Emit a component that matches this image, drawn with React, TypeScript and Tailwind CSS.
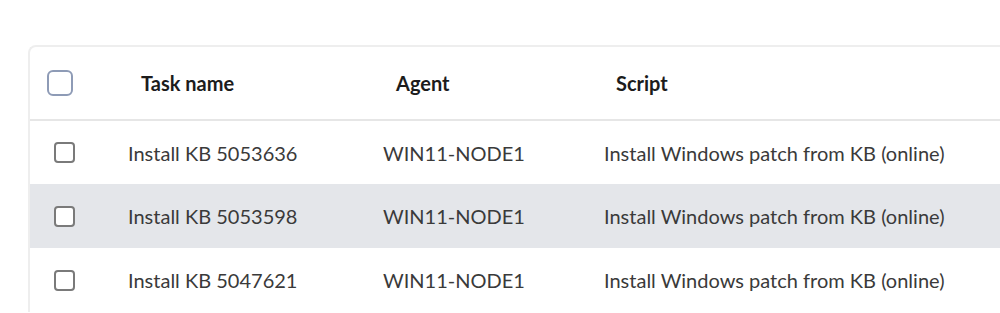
const rows = [
  { name: "Install KB 5053636", agent: "WIN11-NODE1", script: "Install Windows patch from KB (online)" },
  { name: "Install KB 5053598", agent: "WIN11-NODE1", script: "Install Windows patch from KB (online)" },
  { name: "Install KB 5047621", agent: "WIN11-NODE1", script: "Install Windows patch from KB (online)" },
];

const Check = ({ head = false }: { head?: boolean }) =>
  head ? (
    <span className="block w-[26px] h-[26px] rounded-[6px] border-2 border-[#8e9bb6] bg-white" />
  ) : (
    <span className="block w-[21px] h-[21px] rounded-[4px] border-2 border-[#7a7a7a] bg-white" />
  );

export default function App() {
  return (
    <div className="w-[1000px] h-[313px] overflow-hidden bg-white font-['Lato','Liberation_Sans',sans-serif]">
      <div className="ml-[28px] mt-[45px] w-[1200px] rounded-tl-[8px] border-l-2 border-t-2 border-[#eeeeee]">
        <table className="table-fixed border-collapse w-full">
          <colgroup>
            <col className="w-[84px]" />
            <col className="w-[255px]" />
            <col className="w-[221px]" />
            <col />
          </colgroup>
          <thead>
            <tr className="h-[73px] border-b-2 border-[#e6e6e6]">
              <th className="pl-[17px] text-left align-middle">
                <Check head />
              </th>
              <th className="pl-[27px] text-left text-[20px] font-bold text-[#1c1c1c]">Task name</th>
              <th className="pl-[27px] text-left text-[20px] font-bold text-[#1c1c1c]">Agent</th>
              <th className="pl-[26px] text-left text-[20px] font-bold text-[#1c1c1c]">Script</th>
            </tr>
          </thead>
          <tbody>
            {rows.map((r, i) => (
              <tr key={r.name} className={`h-[64px] ${i === 1 ? "bg-[#e4e6ea]" : "bg-white"}`}>
                <td className="pl-[24px] align-middle">
                  <Check />
                </td>
                <td className="pl-[14px] text-[20px] text-[#3a3a3a]">{r.name}</td>
                <td className="pl-[14px] text-[20px] text-[#3a3a3a]">{r.agent}</td>
                <td className="pl-[14px] text-[20px] text-[#3a3a3a]">{r.script}</td>
              </tr>
            ))}
          </tbody>
        </table>
      </div>
    </div>
  );
}
